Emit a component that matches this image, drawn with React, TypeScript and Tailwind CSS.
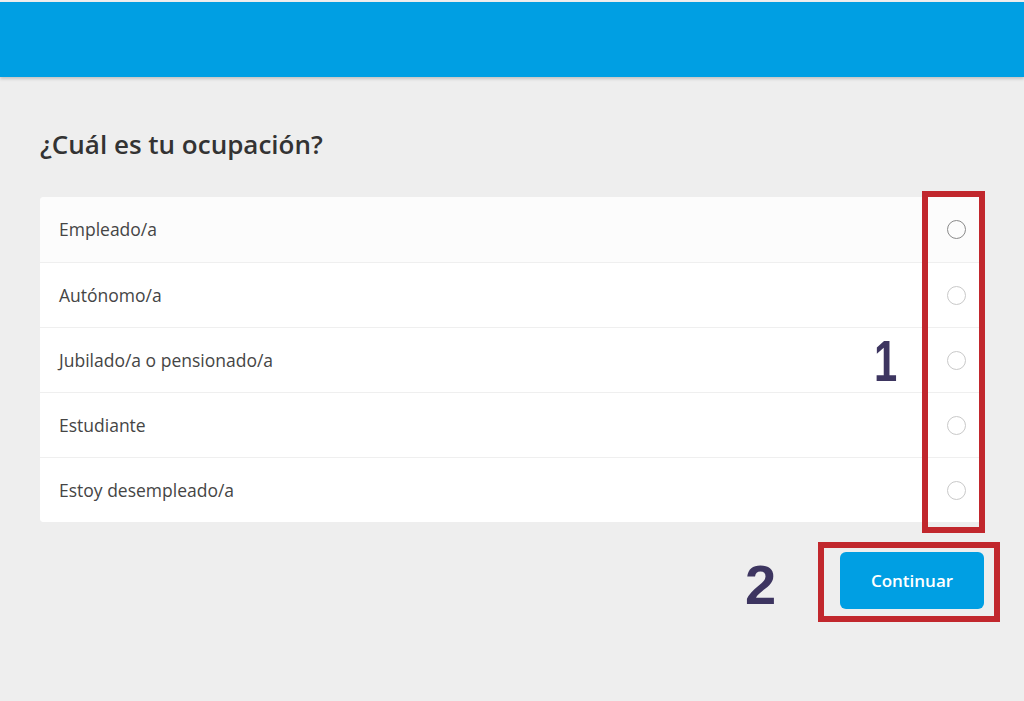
import { useState } from "react";

const options = [
  "Empleado/a",
  "Autónomo/a",
  "Jubilado/a o pensionado/a",
  "Estudiante",
  "Estoy desempleado/a",
];

export default function App() {
  const [selected, setSelected] = useState<number | null>(null);

  return (
    <div
      className="relative min-h-[701px] bg-[#eeeeee] pt-[2px]"
      style={{ fontFamily: "'Open Sans', Lato, sans-serif" }}
    >
      <div className="h-[75px] bg-[#009fe3] shadow-[0_2px_3px_rgba(0,0,0,0.18)]" />

      <div className="px-[40px]">
        <h1 className="mt-[50px] text-[26px] font-semibold leading-[34px] text-[#333333]">
          ¿Cuál es tu ocupación?
        </h1>

        <ul className="mt-[36px] overflow-hidden rounded-[4px] bg-white">
          {options.map((label, i) => (
            <li
              key={label}
              onClick={() => setSelected(i)}
              className={`flex h-[65px] cursor-pointer items-center justify-between border-[#efefef] pl-[19px] pr-[18px] ${
                i > 0 ? "border-t" : ""
              } ${i === 0 ? "bg-[#fcfcfc]" : "bg-white"}`}
            >
              <span className="text-[17.5px] text-[#454545]">{label}</span>
              <span
                className={`flex h-[19px] w-[19px] items-center justify-center rounded-full border-[1.5px] ${
                  i === 0 ? "border-[#8a8a8a]" : "border-[#c9c9c9]"
                }`}
              >
                {selected === i && <span className="h-[9px] w-[9px] rounded-full bg-[#009fe3]" />}
              </span>
            </li>
          ))}
        </ul>

        <div className="mt-[30px] flex justify-end">
          <button className="h-[57px] w-[144px] rounded-[6px] bg-[#009fe3] text-[17px] font-semibold text-white">
            Continuar
          </button>
        </div>
      </div>

      {/* annotation overlays */}
      <div className="pointer-events-none absolute left-[922px] top-[191px] h-[342px] w-[63px] border-[6px] border-[#c1272d]" />
      <div className="pointer-events-none absolute left-[818px] top-[542px] h-[80px] w-[182px] border-[6px] border-[#c1272d]" />
      <span
        className="absolute left-[874px] top-[328px] origin-left scale-x-[0.72] text-[58px] font-black leading-[66px] text-[#3d3560]"
        style={{ fontFamily: "'Liberation Sans', Arial, sans-serif" }}
      >
        1
      </span>
      <span
        className="absolute left-[745px] top-[553px] text-[56px] font-black leading-[64px] text-[#3d3560]"
        style={{ fontFamily: "'Liberation Sans', Arial, sans-serif" }}
      >
        2
      </span>
    </div>
  );
}
